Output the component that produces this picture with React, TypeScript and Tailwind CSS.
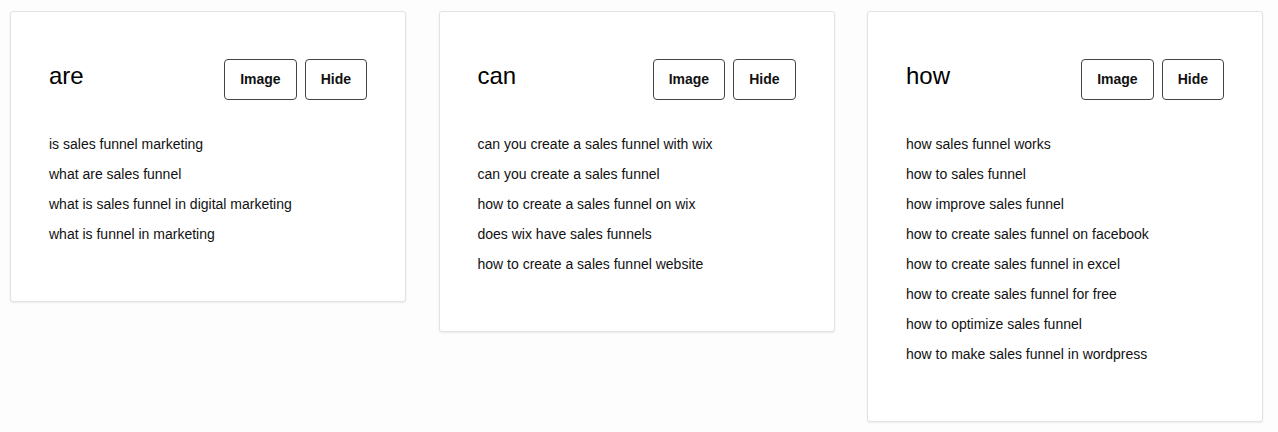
import React from "react";

const cards = [
  {
    title: "are",
    items: [
      "is sales funnel marketing",
      "what are sales funnel",
      "what is sales funnel in digital marketing",
      "what is funnel in marketing",
    ],
  },
  {
    title: "can",
    items: [
      "can you create a sales funnel with wix",
      "can you create a sales funnel",
      "how to create a sales funnel on wix",
      "does wix have sales funnels",
      "how to create a sales funnel website",
    ],
  },
  {
    title: "how",
    items: [
      "how sales funnel works",
      "how to sales funnel",
      "how improve sales funnel",
      "how to create sales funnel on facebook",
      "how to create sales funnel in excel",
      "how to create sales funnel for free",
      "how to optimize sales funnel",
      "how to make sales funnel in wordpress",
    ],
  },
];

export default function App() {
  return (
    <div
      className="min-h-[432px] w-[1278px] bg-[#fdfdfd] pt-[11px] pl-[10px] pr-[15px] grid grid-cols-3 gap-x-[32.5px] items-start"
      style={{ fontFamily: '"Liberation Sans", Arial, sans-serif' }}
    >
      {cards.map((c) => (
        <div
          key={c.title}
          className="bg-white border border-[#e3e3e3] rounded-[3px] shadow-[0_1px_2px_rgba(0,0,0,0.08)] px-[38px] pt-[47px] pb-[52px]"
        >
          <div className="flex items-start justify-between">
            <h2 className="mt-[2px] text-[24px] leading-[30px] text-[#000] font-medium">{c.title}</h2>
            <div className="flex gap-[8px]">
              <button className="h-[41px] px-[15px] border border-[#444] rounded-[4px] text-[14px] font-bold text-[#111] bg-white">
                Image
              </button>
              <button className="h-[41px] px-[15px] border border-[#444] rounded-[4px] text-[14px] font-bold text-[#111] bg-white">
                Hide
              </button>
            </div>
          </div>
          <ul className="mt-[29px]">
            {c.items.map((it) => (
              <li key={it} className="text-[14px] leading-[30px] text-[#111]">
                {it}
              </li>
            ))}
          </ul>
        </div>
      ))}
    </div>
  );
}
